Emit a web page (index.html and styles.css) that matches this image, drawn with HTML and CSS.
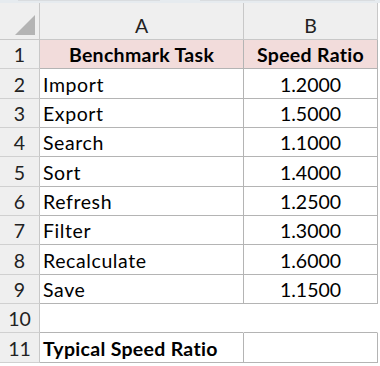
FILE: index.html
```html
<!DOCTYPE html>
<html>
<head>
<meta charset="utf-8">
<link rel="stylesheet" href="styles.css">
</head>
<body>
<div class="topband"><span class="seg seg1"></span><span class="seg seg2"></span></div>
<div class="sheet">
  <div class="corner"><svg width="20" height="20" viewBox="0 0 20 20"><polygon points="20,0 20,20 0,20" fill="#b4b4b4"/></svg></div>
  <div class="colhead">A</div>
  <div class="colhead">B</div>

  <div class="rowhead r29">1</div>
  <div class="cell hdr center bold r29">Benchmark Task</div>
  <div class="cell hdr center bold r29">Speed Ratio</div>

  <div class="rowhead r30">2</div>
  <div class="cell r30">Import</div>
  <div class="cell center num r30">1.2000</div>

  <div class="rowhead r29">3</div>
  <div class="cell r29">Export</div>
  <div class="cell center num r29">1.5000</div>

  <div class="rowhead r29">4</div>
  <div class="cell r29">Search</div>
  <div class="cell center num r29">1.1000</div>

  <div class="rowhead r30">5</div>
  <div class="cell r30">Sort</div>
  <div class="cell center num r30">1.4000</div>

  <div class="rowhead r29">6</div>
  <div class="cell r29">Refresh</div>
  <div class="cell center num r29">1.2500</div>

  <div class="rowhead r29">7</div>
  <div class="cell r29">Filter</div>
  <div class="cell center num r29">1.3000</div>

  <div class="rowhead r30">8</div>
  <div class="cell r30">Recalculate</div>
  <div class="cell center num r30">1.6000</div>

  <div class="rowhead r29">9</div>
  <div class="cell r29">Save</div>
  <div class="cell center num r29">1.1500</div>

  <div class="rowhead r29">10</div>
  <div class="cell noright r29"></div>
  <div class="cell noright r29"></div>

  <div class="rowhead r30">11</div>
  <div class="cell bold r30">Typical Speed Ratio</div>
  <div class="cell r30"></div>
</div>
</body>
</html>
```

FILE: styles.css
```css
html, body {
  margin: 0;
  padding: 0;
  background: #ffffff;
}
body {
  width: 380px;
  height: 366px;
  overflow: hidden;
  font-family: Lato, "Liberation Sans", sans-serif;
  font-size: 19.5px;
  color: #000;
}
.topband {
  height: 3px;
  background: #e6ebef;
  position: relative;
}
.seg {
  position: absolute;
  top: 0;
  height: 1px;
  background: #d9dcdf;
}
.seg1 { left: 18px; width: 142px; }
.seg2 { left: 200px; width: 175px; }
.sheet {
  display: grid;
  grid-template-columns: 40px 204px 134px;
  width: 378px;
}
.corner {
  height: 37px;
  box-sizing: border-box;
  background: #efefef;
  border-right: 1px solid #c8c8c8;
  border-bottom: 1px solid #c8c8c8;
  display: flex;
  align-items: flex-end;
  justify-content: flex-end;
  padding: 0 4px 4px 0;
}
.corner svg { display: block; }
.colhead {
  height: 37px;
  box-sizing: border-box;
  background: #efefef;
  border-right: 1px solid #c8c8c8;
  border-bottom: 1px solid #c8c8c8;
  display: flex;
  align-items: flex-end;
  justify-content: center;
  padding-bottom: 3px;
  color: #222;
  line-height: 20px;
}
.rowhead {
  box-sizing: border-box;
  background: #efefef;
  border-right: 1px solid #c8c8c8;
  border-bottom: 1px solid #d0d0d0;
  display: flex;
  align-items: flex-end;
  justify-content: center;
  padding-bottom: 3px;
  color: #222;
  line-height: 20px;
}
.cell {
  box-sizing: border-box;
  border-right: 1px solid #b4b4b4;
  border-bottom: 1px solid #b4b4b4;
  display: flex;
  align-items: flex-end;
  padding: 0 0 3px 3px;
  line-height: 20px;
  white-space: nowrap;
  letter-spacing: 0.6px;
}
.r29 { height: 29px; }
.r30 { height: 30px; }
.center { justify-content: center; padding-left: 0; }
.bold { font-weight: 700; letter-spacing: 0.3px; }
.num { letter-spacing: 0; }
.hdr { background: #f2dcdb; }
.noright { border-right-color: #ffffff; }
```
